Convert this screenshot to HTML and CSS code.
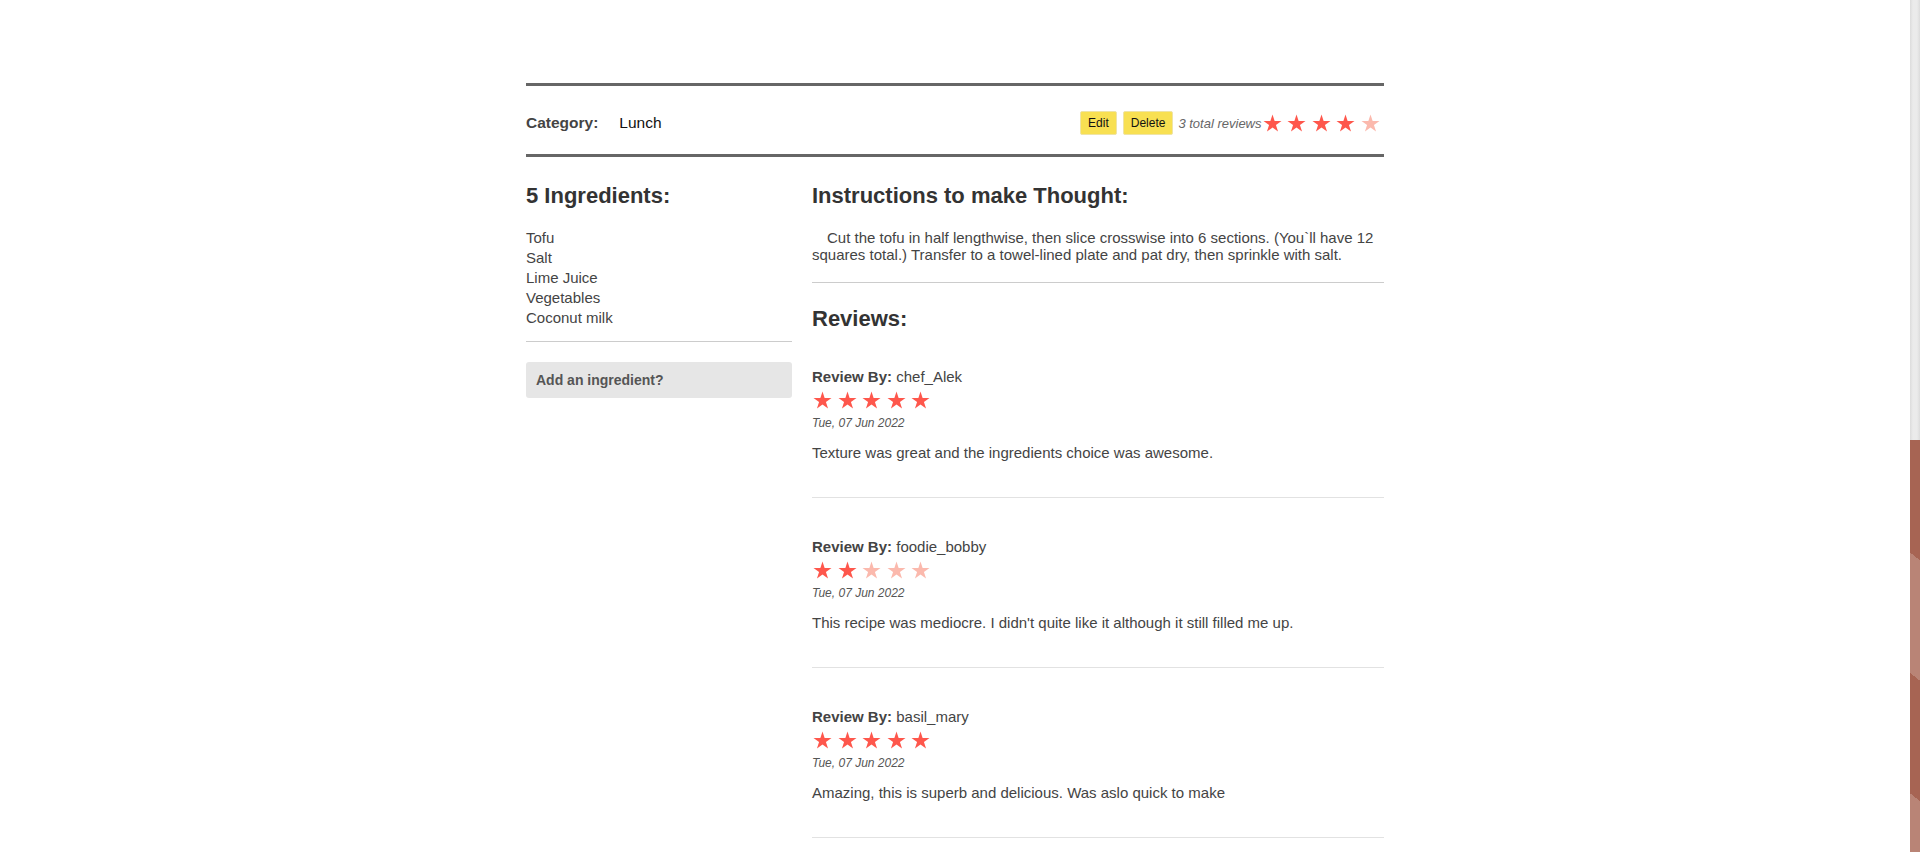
FILE: index.html
```html
<!DOCTYPE html>
<html lang="en">
<head>
<meta charset="utf-8">
<title>Thought - Recipe</title>
<link rel="stylesheet" href="styles.css">
</head>
<body>
<svg class="defs" width="0" height="0" aria-hidden="true">
  <symbol id="star" viewBox="0 0 24.5 20">
    <polygon points="10.5,1.5 12.63,8.04 19.5,8.04 13.94,12.08 16.06,18.61 10.5,14.57 4.94,18.61 7.06,12.08 1.5,8.04 8.37,8.04"/>
  </symbol>
</svg>
<div class="page">
  <main class="content">
    <div class="recipe">
      <div class="recipe-bar">
        <div class="category">
          <span class="category-label">Category:</span>
          <span class="category-value">Lunch</span>
        </div>
        <div class="bar-actions">
          <button class="btn">Edit</button>
          <button class="btn">Delete</button>
          <span class="total-reviews">3 total reviews</span>
          <span class="stars">
            <svg class="star star-on"><use href="#star"/></svg>
            <svg class="star star-on"><use href="#star"/></svg>
            <svg class="star star-on"><use href="#star"/></svg>
            <svg class="star star-on"><use href="#star"/></svg>
            <svg class="star star-off"><use href="#star"/></svg>
          </span>
        </div>
      </div>

      <div class="recipe-body">
        <aside class="ingredients">
          <h2>5 Ingredients:</h2>
          <ul class="ingredient-list">
            <li>Tofu</li>
            <li>Salt</li>
            <li>Lime Juice</li>
            <li>Vegetables</li>
            <li>Coconut milk</li>
          </ul>
          <hr class="divider">
          <div class="add-ingredient">Add an ingredient?</div>
        </aside>

        <section class="instructions">
          <h2>Instructions to make Thought:</h2>
          <p class="instructions-text">Cut the tofu in half lengthwise, then slice crosswise into 6 sections. (You`ll have 12 squares total.) Transfer to a towel-lined plate and pat dry, then sprinkle with salt.</p>
          <hr class="divider">
          <h2 class="reviews-title">Reviews:</h2>

          <div class="review">
            <div class="review-by"><b>Review By:</b> chef_Alek</div>
            <div class="stars">
              <svg class="star star-on"><use href="#star"/></svg>
              <svg class="star star-on"><use href="#star"/></svg>
              <svg class="star star-on"><use href="#star"/></svg>
              <svg class="star star-on"><use href="#star"/></svg>
              <svg class="star star-on"><use href="#star"/></svg>
            </div>
            <div class="review-date">Tue, 07 Jun 2022</div>
            <p class="review-text">Texture was great and the ingredients choice was awesome.</p>
          </div>

          <div class="review">
            <div class="review-by"><b>Review By:</b> foodie_bobby</div>
            <div class="stars">
              <svg class="star star-on"><use href="#star"/></svg>
              <svg class="star star-on"><use href="#star"/></svg>
              <svg class="star star-off"><use href="#star"/></svg>
              <svg class="star star-off"><use href="#star"/></svg>
              <svg class="star star-off"><use href="#star"/></svg>
            </div>
            <div class="review-date">Tue, 07 Jun 2022</div>
            <p class="review-text">This recipe was mediocre. I didn't quite like it although it still filled me up.</p>
          </div>

          <div class="review">
            <div class="review-by"><b>Review By:</b> basil_mary</div>
            <div class="stars">
              <svg class="star star-on"><use href="#star"/></svg>
              <svg class="star star-on"><use href="#star"/></svg>
              <svg class="star star-on"><use href="#star"/></svg>
              <svg class="star star-on"><use href="#star"/></svg>
              <svg class="star star-on"><use href="#star"/></svg>
            </div>
            <div class="review-date">Tue, 07 Jun 2022</div>
            <p class="review-text">Amazing, this is superb and delicious. Was aslo quick to make</p>
          </div>
        </section>
      </div>
    </div>
  </main>
  <div class="scrollbar"><div class="scrollbar-thumb"></div></div>
</div>
</body>
</html>
```

FILE: styles.css
```css
* { box-sizing: border-box; }

html, body {
  margin: 0;
  height: 100%;
}

body {
  font-family: "Liberation Sans", Arial, sans-serif;
  color: #444;
  background: #fff;
  overflow: hidden;
}

.defs {
  position: absolute;
  width: 0;
  height: 0;
  overflow: hidden;
}

.page {
  display: flex;
  height: 100vh;
}

.content {
  flex: 1;
  min-width: 0;
  padding-top: 83px;
}

.recipe {
  width: 858px;
  margin: 0 auto;
}

/* Category bar */
.recipe-bar {
  display: flex;
  align-items: center;
  justify-content: space-between;
  border-top: 3px solid #666;
  border-bottom: 3px solid #666;
  padding: 25px 0 19px;
}

.category {
  display: flex;
  align-items: baseline;
  gap: 21px;
}

.category-label {
  font-weight: bold;
  font-size: 15.5px;
  color: #444;
}

.category-value {
  font-size: 15.5px;
  color: #111;
}

.bar-actions {
  display: flex;
  align-items: center;
}

.btn {
  font-family: "Liberation Sans", Arial, sans-serif;
  font-size: 12px;
  height: 24px;
  padding: 0 7px;
  margin: 0;
  background: #f8e052;
  border: 1px solid #efe4a6;
  border-radius: 2px;
  color: #111;
}

.btn + .btn {
  margin-left: 6px;
}

.total-reviews {
  margin-left: 5px;
  font-style: italic;
  font-size: 13px;
  color: #666;
}

.stars {
  display: flex;
}

.star {
  display: block;
  width: 24.5px;
  height: 20px;
}

.star-on { fill: #fe574c; }
.star-off { fill: #fbb9ad; }

/* Body */
.recipe-body {
  display: grid;
  grid-template-columns: 286px 572px;
}

.ingredients {
  padding-right: 20px;
}

h2 {
  font-size: 22px;
  line-height: 26px;
  margin: 26px 0 0;
  color: #333;
  font-weight: bold;
}

.ingredient-list {
  list-style: none;
  margin: 19px 0 0;
  padding: 0;
  font-size: 15px;
  line-height: 20px;
  color: #444;
}

.divider {
  border: 0;
  border-top: 1px solid #ccc;
  margin: 13px 0 0;
  height: 0;
}

.add-ingredient {
  margin-top: 20px;
  height: 36px;
  line-height: 36px;
  padding: 0 10px;
  background: #e6e6e6;
  border-radius: 3px;
  font-size: 14px;
  font-weight: bold;
  color: #555;
}

.instructions-text {
  margin: 20px 0 0;
  font-size: 15px;
  text-indent: 15px;
  color: #444;
}

.instructions .divider {
  margin-top: 19px;
}

.reviews-title {
  margin-top: 26.5px;
  line-height: 18px;
}

.review {
  padding: 40px 0 35px;
  border-bottom: 1px solid #e2e2e2;
}

.review-by {
  font-size: 15px;
  line-height: 18px;
  color: #444;
}

.review .stars {
  margin-top: 4px;
}

.review-date {
  margin-top: 6px;
  font-size: 12px;
  line-height: 14px;
  font-style: italic;
  color: #555;
}

.review-text {
  margin: 14px 0 0;
  font-size: 15px;
  line-height: 18px;
  color: #444;
}

/* Right-hand scrollbar */
.scrollbar {
  width: 10px;
  flex: none;
  display: flex;
  flex-direction: column;
  background: linear-gradient(to right, #dcdcdc, #ebebeb 30%, #ebebeb 70%, #dcdcdc);
}

.scrollbar-thumb {
  margin-top: auto;
  height: 412px;
  background: repeating-linear-gradient(218.66deg, #a76453 0 94px, #b98476 94px 188px);
}
```
